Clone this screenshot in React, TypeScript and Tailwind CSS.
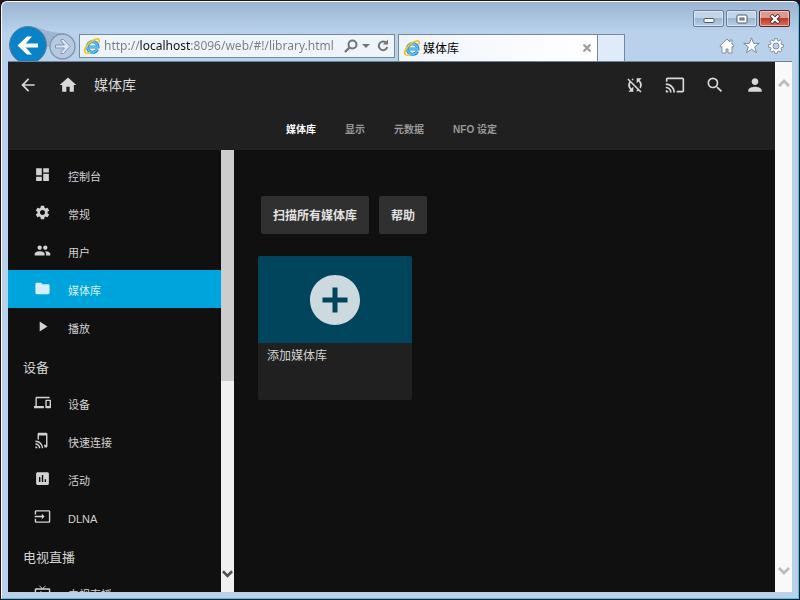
import type { ReactNode } from 'react';
import type { IconType } from 'react-icons';
import {
  MdAddCircle,
  MdArrowBack,
  MdAssessment,
  MdCast,
  MdDashboard,
  MdDevices,
  MdFolder,
  MdHome,
  MdInput,
  MdLiveTv,
  MdPeople,
  MdPerson,
  MdPlayArrow,
  MdSearch,
  MdSettings,
  MdSyncDisabled,
  MdTapAndPlay,
} from 'react-icons/md';

type NavEntry = { label: string; icon: IconType; active?: boolean };
type NavGroup = { title?: string; items: NavEntry[] };

const groups: NavGroup[] = [
  {
    items: [
      { label: '控制台', icon: MdDashboard },
      { label: '常规', icon: MdSettings },
      { label: '用户', icon: MdPeople },
      { label: '媒体库', icon: MdFolder, active: true },
      { label: '播放', icon: MdPlayArrow },
    ],
  },
  {
    title: '设备',
    items: [
      { label: '设备', icon: MdDevices },
      { label: '快速连接', icon: MdTapAndPlay },
      { label: '活动', icon: MdAssessment },
      { label: 'DLNA', icon: MdInput },
    ],
  },
  { title: '电视直播', items: [{ label: '电视直播', icon: MdLiveTv }] },
];

const tabs = ['媒体库', '显示', '元数据', 'NFO 设定'];

function BrowserLogo() {
  return (
    <svg viewBox="0 0 16 16" className="size-4 shrink-0" aria-hidden="true">
      <path
        d="M13.400 11.200A5.300 5.300 0 1 1 13.900 9H5"
        fill="none"
        stroke="#2b8fd0"
        strokeWidth="3.200"
      />
      <path
        d="M13.200 11.200A5.200 5.200 0 1 1 13.700 9H5"
        fill="none"
        stroke="#5cbcf0"
        strokeWidth="1.800"
      />
      <path
        d="M2 15C-.6 13.400 1.400 8.400 5.600 4.600 9.600 1.200 14 0 15 1.600c.5.800.2 2-.4 3"
        fill="none"
        stroke="#f7c21e"
        strokeWidth="1.700"
      />
      <path d="M2 15c1 .5 2.500.2 4-.8" fill="none" stroke="#f7c21e" strokeWidth="1.300" />
    </svg>
  );
}

function Chevron({ up = false, className }: { up?: boolean; className: string }) {
  return (
    <svg viewBox="0 0 12 8" className={className} aria-hidden="true">
      <path
        d={up ? 'M1 7l5-5 5 5' : 'M1 1l5 5 5-5'}
        fill="none"
        stroke="currentColor"
        strokeWidth="2.800"
      />
    </svg>
  );
}

function CaptionButton({ label, close, children }: { label: string; close?: boolean; children: ReactNode }) {
  return (
    <button
      type="button"
      aria-label={label}
      className={
        'flex h-[17px] w-[31px] items-center justify-center rounded-xs border shadow-[inset_0_0_0_1px_rgba(255,255,255,0.45)] ' +
        (close
          ? 'border-[#5c2a2c] bg-linear-to-b from-[#dc9a8c] from-45% via-[#bc3a24] via-50% to-[#d8705a]'
          : 'border-[#667f9d] bg-linear-to-b from-[#c3d5e9] from-45% via-[#9db6d2] via-50% to-[#b6cde5]')
      }
    >
      {children}
    </button>
  );
}

function BrowserChrome() {
  return (
    <header className="relative shrink-0 overflow-hidden border-b border-[#6d849c] bg-linear-to-b from-[#9ab4d2] to-[#b9d1eb] to-50%">
      <div className="flex h-8 items-start justify-end gap-0.5 pt-2 pr-0.5">
        <CaptionButton label="最小化">
          <svg viewBox="0 0 12 8" className="h-2 w-3">
            <rect x="1" y="3.500" width="10" height="4" rx="1" fill="#fff" stroke="#4d5a6b" />
          </svg>
        </CaptionButton>
        <CaptionButton label="最大化">
          <svg viewBox="0 0 12 10" className="h-[10px] w-3">
            <rect x="1" y="1" width="10" height="8" rx="1" fill="#fff" stroke="#4d5a6b" />
            <rect x="4" y="4" width="4" height="2" fill="#b4cae2" stroke="#4d5a6b" />
          </svg>
        </CaptionButton>
        <CaptionButton label="关闭" close>
          <svg viewBox="0 0 12 10" className="h-[10px] w-3">
            <path d="M2 1l8 8M10 1L2 9" stroke="#4d3038" strokeWidth="4" />
            <path d="M2.500 1.500l7 7M9.500 1.500l-7 7" stroke="#fff" strokeWidth="2.200" />
          </svg>
        </CaptionButton>
      </div>

      <div className="flex h-[27px] items-start">
        <div className="relative -mt-2 flex w-[71px] shrink-0 items-start">
          <svg viewBox="0 0 71 38" className="absolute top-0 left-0 h-[38px] w-[71px]" aria-hidden="true">
            <path d="M22 0C34 2 40 7 56 7v14H22z" fill="#9cb4cd" />
          </svg>
          <button type="button" aria-label="后退" className="relative ml-px size-[38px]">
            <svg viewBox="0 0 38 38" className="size-full">
              <circle cx="19" cy="19" r="18.500" fill="#0a83c6" stroke="#5b7f9f" />
              <path d="M29 19.500H12" fill="none" stroke="#fff" strokeWidth="4" />
              <path d="M8.500 19.500L18 10.500h5l-8 9 8 9h-5z" fill="#fff" />
            </svg>
          </button>
          <button type="button" aria-label="前进" className="relative mt-[7px] ml-0.5 size-[27px]">
            <svg viewBox="0 0 27 27" className="size-full">
              <circle cx="13.500" cy="13.500" r="12.500" fill="#b5cae2" stroke="#8397b0" strokeWidth="1.400" />
              <path
                d="M6.500 12h9L12 8V6.500h2.500l6.500 7-6.500 7H12V19l3.500-4h-9z"
                fill="#dce7f5"
                stroke="#8195b0"
              />
            </svg>
          </button>
        </div>

        <div className="flex h-6 w-[316px] shrink-0 items-center border border-[#73899f] bg-[#eff4fb] pl-1 font-['Noto_Sans','Noto_Sans_CJK_SC',sans-serif]">
          <BrowserLogo />
          <input
            type="text"
            aria-label="地址"
            defaultValue="http://localhost:8096/web/#!/library.html"
            className="ml-1 w-[240px] bg-[linear-gradient(to_right,#7c7c7c_36px,#111_36px,#111_86px,#7c7c7c_86px)] bg-clip-text text-[12px] leading-5 text-transparent outline-none"
          />
          <button type="button" aria-label="搜索" className="text-[#70757c]">
            <svg viewBox="0 0 14 14" className="size-[14px]">
              <circle cx="8.500" cy="5.500" r="4" fill="none" stroke="currentColor" strokeWidth="2" />
              <path d="M5.500 8.500L1 13" stroke="currentColor" strokeWidth="2.400" />
            </svg>
          </button>
          <button type="button" aria-label="显示地址列表" className="ml-1 text-[#70757c]">
            <svg viewBox="0 0 8 4" className="h-1 w-2">
              <path d="M0 0h8L4 4z" fill="currentColor" />
            </svg>
          </button>
          <button type="button" aria-label="刷新" className="ml-1.5 text-[#70757c]">
            <svg viewBox="0 0 14 14" className="size-[14px]">
              <path d="M9.500 3.200A4.300 4.300 0 1 0 11.300 8" fill="none" stroke="currentColor" strokeWidth="2" />
              <path d="M7 5.500h5V.5z" fill="currentColor" />
            </svg>
          </button>
        </div>

        <div className="ml-[3px] flex h-[27px] w-[200px] shrink-0 items-center border border-b-0 border-[#73899f] bg-linear-to-r from-[#f0f5fb] to-white pr-1.5 pl-[5px]">
          <BrowserLogo />
          <span className="ml-[3px] flex-1 pt-0.5 text-[12px] leading-5 text-black">媒体库</span>
          <button type="button" aria-label="关闭标签页" className="text-[#9a9a9a]">
            <svg viewBox="0 0 8 8" className="size-2">
              <path d="M.5.5l7 7M7.500.5l-7 7" stroke="currentColor" strokeWidth="2" />
            </svg>
          </button>
        </div>
        <button
          type="button"
          aria-label="新建标签页"
          className="h-[27px] w-[27px] shrink-0 border border-b-0 border-l-0 border-[#73899f] bg-[#dfebf8]"
        />

        <div className="ml-auto flex items-center gap-2 pt-[3px] pr-2">
          <button type="button" aria-label="主页">
            <svg viewBox="0 0 16 16" className="size-4">
              <path
                d="M8 1L.8 8l1.400 1.200L3 8.500V15h4v-4h2v4h4V8.500l.8.700L15.200 8 13 5.800V2h-2v2z"
                fill="#fff"
                stroke="#74869d"
                strokeWidth=".9"
              />
            </svg>
          </button>
          <button type="button" aria-label="收藏夹">
            <svg viewBox="0 0 16 16" className="size-[17px]">
              <path
                d="M8 .8l2 5.200h5.400L11 9.300l1.700 5.500L8 11.500l-4.700 3.300L5 9.300.6 6H6z"
                fill="#fff"
                stroke="#74869d"
                strokeWidth=".9"
              />
            </svg>
          </button>
          <button type="button" aria-label="工具">
            <svg viewBox="0 0 16 16" className="size-4">
              <path
                d="M6.800.6h2.400l.3 1.900 1.200.5 1.500-1.200 1.800 1.800L12.900 5.200l.5 1.200 2 .3v2.500l-2 .3-.5 1.200 1.100 1.600-1.800 1.800-1.500-1.200-1.200.5-.3 2H6.800l-.3-2-1.200-.5-1.500 1.200L2 12.300l1.100-1.600-.5-1.200-2-.3V6.700l2-.3.5-1.200L2 3.600l1.800-1.800L5.300 3l1.200-.5z"
                fill="#fff"
                stroke="#74869d"
                strokeWidth=".9"
              />
              <circle cx="8" cy="8" r="3" fill="#b9d1eb" stroke="#74869d" strokeWidth=".9" />
            </svg>
          </button>
        </div>
      </div>
    </header>
  );
}

function HeaderButton({ label, icon: Icon }: { label: string; icon: IconType }) {
  return (
    <button type="button" aria-label={label} className="flex h-full w-10 items-center justify-center">
      <Icon className="size-5" />
    </button>
  );
}

function AppHeader() {
  return (
    <header className="shrink-0 bg-[#202020] text-[#d8d8d8]">
      <div className="flex h-[46px] items-center">
        <HeaderButton label="返回" icon={MdArrowBack} />
        <HeaderButton label="首页" icon={MdHome} />
        <h1 className="ml-1.5 flex-1 text-[14px] leading-5">媒体库</h1>
        <HeaderButton label="同步播放" icon={MdSyncDisabled} />
        <HeaderButton label="投放" icon={MdCast} />
        <HeaderButton label="搜索" icon={MdSearch} />
        <HeaderButton label="用户" icon={MdPerson} />
      </div>
      <nav className="flex h-[42px] items-center justify-center gap-[29px] pt-0.5 text-[10px] leading-4 font-bold">
        {tabs.map((tab, i) => (
          <a key={tab} href="#" className={i === 0 ? 'text-white' : 'text-[#999999]'}>
            {tab}
          </a>
        ))}
      </nav>
    </header>
  );
}

function Sidebar() {
  return (
    <aside className="flex w-[226px] shrink-0">
      <nav className="min-w-0 flex-1 overflow-hidden pt-1.5 text-[#d2d2d2]">
        {groups.map((group, g) => (
          <section key={g}>
            {group.title && <h2 className="h-[38px] pt-3 pl-[15px] text-[13px] leading-5">{group.title}</h2>}
            <ul>
              {group.items.map(({ label, icon: Icon, active }) => (
                <li key={label}>
                  <a
                    href="#"
                    className={
                      'flex h-[38px] items-center pl-[26px] text-[11px] leading-4 ' +
                      (active ? 'bg-[#00a4dc] text-[#d4eff9]' : '')
                    }
                  >
                    <Icon className="mb-px size-[17px]" />
                    <span className="pt-[3px] pl-[17px]">{label}</span>
                  </a>
                </li>
              ))}
            </ul>
          </section>
        ))}
      </nav>
      <div className="flex w-[13px] flex-col items-center justify-between bg-[#f0f0f0] pb-3.5" aria-hidden="true">
        <div className="h-[231px] w-full bg-[#cdcdcd]" />
        <Chevron className="h-2 w-[11px] text-[#505050]" />
      </div>
    </aside>
  );
}

function Library() {
  return (
    <main className="min-w-0 flex-1 px-6 pt-[46px]">
      <div className="flex gap-[10px] pl-[3px] text-[12px] leading-[18px] font-bold text-[#e2e2e2]">
        <button type="button" className="rounded-xs bg-[#303030] px-3 pt-[11px] pb-[9px]">
          扫描所有媒体库
        </button>
        <button type="button" className="rounded-xs bg-[#303030] px-3 pt-[11px] pb-[9px]">
          帮助
        </button>
      </div>
      <button
        type="button"
        className="mt-[22px] flex h-36 w-[154px] flex-col overflow-hidden rounded-xs bg-[#202020] text-left text-[#d2d2d2]"
      >
        <span className="flex h-[87px] w-full items-center justify-center bg-[#00455c]">
          <MdAddCircle className="size-[60px] text-[#ccdadf]" />
        </span>
        <span className="px-[9px] pt-1 text-[12px] leading-[18px]">添加媒体库</span>
      </button>
    </main>
  );
}

export default function App() {
  return (
    <div className="flex h-screen flex-col overflow-hidden bg-[#1c1420] font-['Liberation_Sans','Noto_Sans_CJK_SC',sans-serif]">
      <div className="m-px flex min-h-0 flex-1 flex-col rounded-t-md border border-t-white border-r-[#2fd0f0] border-b-[#2fd0f0] border-l-white bg-[#b9d1eb] bg-linear-to-b from-[#9ab4d2] to-[#b9d1eb] to-[32px] px-1.5 pb-1.5">
        <BrowserChrome />
        <div className="flex min-h-0 flex-1">
          <div className="flex min-w-0 flex-1 flex-col bg-[#101010]">
            <AppHeader />
            <div className="flex min-h-0 flex-1">
              <Sidebar />
              <Library />
            </div>
          </div>
          <div
            className="flex w-[17px] shrink-0 flex-col items-center justify-between bg-[#f9f9f9] pt-[17px] pb-[17px] text-[#bdbdbd]"
            aria-hidden="true"
          >
            <Chevron up className="h-2 w-3" />
            <Chevron className="h-2 w-3" />
          </div>
        </div>
      </div>
    </div>
  );
}
